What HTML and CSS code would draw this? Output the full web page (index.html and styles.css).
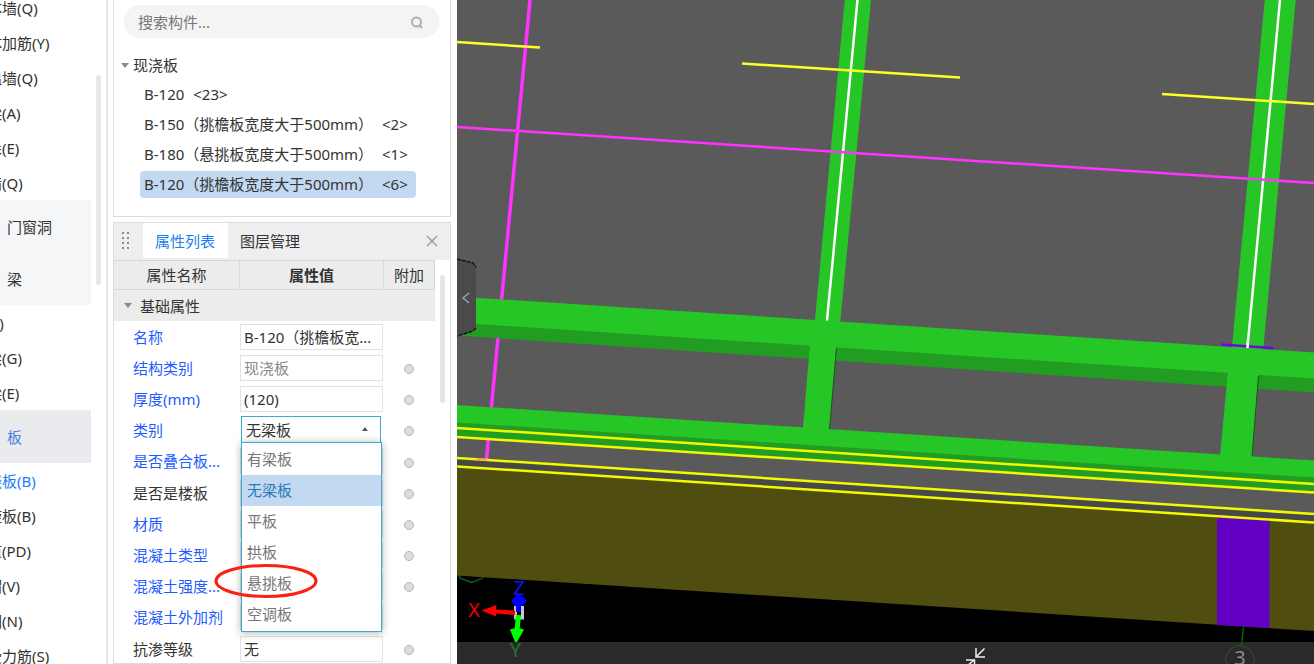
FILE: index.html
```
<!DOCTYPE html>
<html lang="zh-CN">
  <head>
    <meta charset="UTF-8" />
    <meta name="viewport" content="width=device-width, initial-scale=1.0" />
    <title>现浇板</title>
    <link rel="stylesheet" href="styles.css">
  </head>
  <body>
    <div class="app">
      <!-- 构件导航 -->
      <nav class="nav">
        <div class="nav-list">
          <div class="nav-items nav-items-first">
            <a href="#">砌体墙(Q)</a>
            <a href="#">砌体加筋(Y)</a>
            <a href="#">保温墙(Q)</a>
            <a href="#">暗梁(A)</a>
            <a href="#">墙垛(E)</a>
            <a href="#">幕墙(Q)</a>
          </div>
          <button class="nav-group" type="button">门窗洞</button>
          <button class="nav-group" type="button">梁</button>
          <div class="nav-items">
            <a href="#">梁(L)</a>
            <a href="#">连梁(G)</a>
            <a href="#">圈梁(E)</a>
          </div>
          <button class="nav-group open" type="button">板</button>
          <div class="nav-items">
            <a href="#" class="current">现浇板(B)</a>
            <a href="#">螺旋板(B)</a>
            <a href="#">坡道(PD)</a>
            <a href="#">柱帽(V)</a>
            <a href="#">板洞(N)</a>
            <a href="#">板受力筋(S)</a>
          </div>
        </div>
        <div class="nav-scroll"></div>
      </nav>

      <div class="side">
        <!-- 构件列表 -->
        <section class="panel tree-panel">
          <div class="search">
            <input type="search" placeholder="搜索构件..." aria-label="搜索构件" />
            <svg width="16" height="16" viewBox="0 0 16 16" fill="none" stroke="#b0b0b0" stroke-width="2">
              <circle cx="7.500" cy="8" r="4.500" />
              <path d="M10.500 11l2.500 3" />
            </svg>
          </div>
          <div class="tree-root"><span class="arrow-down"></span>现浇板</div>
          <ul class="tree">
            <li>B-120 <span class="count">&lt;23&gt;</span></li>
            <li>B-150（挑檐板宽度大于500mm） <span class="count">&lt;2&gt;</span></li>
            <li>B-180（悬挑板宽度大于500mm） <span class="count">&lt;1&gt;</span></li>
            <li class="selected">B-120（挑檐板宽度大于500mm） <span class="count">&lt;6&gt;</span></li>
          </ul>
        </section>

        <!-- 属性列表 -->
        <section class="panel props-panel">
          <div class="tabs">
            <svg class="grip" width="10" height="20" viewBox="0 0 10 20" fill="#8a8a8a">
              <path d="M1 1h2v2H1zM6 1h2v2H6zM1 6h2v2H1zM6 6h2v2H6zM1 11h2v2H1zM6 11h2v2H6zM1 16h2v2H1zM6 16h2v2H6z" />
            </svg>
            <button class="tab active" type="button">属性列表</button>
            <button class="tab" type="button">图层管理</button>
            <button class="close" type="button" aria-label="关闭">
              <svg width="12" height="12" viewBox="0 0 12 12" stroke="#a0a0a0" stroke-width="1.500">
                <path d="M1 1l10 10M11 1L1 11" />
              </svg>
            </button>
          </div>
          <div class="props-body">
            <table class="props">
              <colgroup>
                <col class="col-name" />
                <col />
                <col class="col-extra" />
              </colgroup>
              <thead>
                <tr>
                  <th>属性名称</th>
                  <th class="strong">属性值</th>
                  <th>附加</th>
                </tr>
                <tr class="group">
                  <td colspan="3"><span class="arrow-down"></span>基础属性</td>
                </tr>
              </thead>
              <tbody>
                <tr>
                  <td class="blue"><label for="p1">名称</label></td>
                  <td><input class="field" id="p1" type="text" value="B-120（挑檐板宽..." /></td>
                  <td></td>
                </tr>
                <tr>
                  <td class="blue"><label for="p2">结构类别</label></td>
                  <td><input class="field" id="p2" type="text" value="现浇板" disabled /></td>
                  <td><input class="dot" type="checkbox" aria-label="附加结构类别" /></td>
                </tr>
                <tr>
                  <td class="blue"><label for="p3">厚度(mm)</label></td>
                  <td><input class="field" id="p3" type="text" value="(120)" /></td>
                  <td><input class="dot" type="checkbox" aria-label="附加厚度" /></td>
                </tr>
                <tr>
                  <td class="blue"><label for="p4">类别</label></td>
                  <td>
                    <div class="combo">
                      <select id="p4">
                        <option>无梁板</option>
                      </select>
                      <span class="arrow-up"></span>
                      <ul class="options">
                        <li>有梁板</li>
                        <li class="selected">无梁板</li>
                        <li>平板</li>
                        <li>拱板</li>
                        <li class="marked">悬挑板
                          <svg class="mark" width="104" height="36" viewBox="0 0 104 36">
                            <ellipse cx="52" cy="18" rx="50" ry="15.500" fill="none" stroke="#fb2010" stroke-width="3" />
                          </svg>
                        </li>
                        <li>空调板</li>
                      </ul>
                    </div>
                  </td>
                  <td><input class="dot" type="checkbox" aria-label="附加类别" /></td>
                </tr>
                <tr>
                  <td class="blue"><label for="p5">是否叠合板...</label></td>
                  <td><input class="field" id="p5" type="text" /></td>
                  <td><input class="dot" type="checkbox" aria-label="附加叠合板" /></td>
                </tr>
                <tr>
                  <td><label for="p6">是否是楼板</label></td>
                  <td><input class="field" id="p6" type="text" /></td>
                  <td><input class="dot" type="checkbox" aria-label="附加楼板" /></td>
                </tr>
                <tr>
                  <td class="blue"><label for="p7">材质</label></td>
                  <td><input class="field" id="p7" type="text" /></td>
                  <td><input class="dot" type="checkbox" aria-label="附加材质" /></td>
                </tr>
                <tr>
                  <td class="blue"><label for="p8">混凝土类型</label></td>
                  <td><input class="field" id="p8" type="text" /></td>
                  <td><input class="dot" type="checkbox" aria-label="附加混凝土类型" /></td>
                </tr>
                <tr>
                  <td class="blue"><label for="p9">混凝土强度...</label></td>
                  <td><input class="field" id="p9" type="text" /></td>
                  <td><input class="dot" type="checkbox" aria-label="附加混凝土强度" /></td>
                </tr>
                <tr>
                  <td class="blue"><label for="p10">混凝土外加剂</label></td>
                  <td><input class="field" id="p10" type="text" /></td>
                  <td></td>
                </tr>
                <tr>
                  <td><label for="p11">抗渗等级</label></td>
                  <td><input class="field" id="p11" type="text" value="无" /></td>
                  <td><input class="dot" type="checkbox" aria-label="附加抗渗等级" /></td>
                </tr>
              </tbody>
            </table>
            <div class="props-scroll"></div>
          </div>
        </section>
      </div>

      <!-- 三维视图 -->
      <main class="view">
        <svg class="scene" viewBox="457 0 857 664" preserveAspectRatio="xMinYMin slice">
          <rect x="457" width="857" height="664" fill="#5a5a5a" />

          <!-- 轴线 -->
          <path d="M530 0L486.500 459" stroke="#ff32ff" stroke-width="3.500" />

          <!-- 竖向梁 -->
          <path d="M844.700 0H871L840 325H814.500z" fill="#26c626" />
          <path d="M1264.700 0H1295.700L1263 352H1231.500z" fill="#26c626" />

          <!-- 上部横梁 -->
          <path d="M457 322L1314 378V392.500L457 335.500z" fill="#219e21" />
          <path d="M457 296.500L1314 352.500V378.500L457 322.700z" fill="#26c626" />

          <!-- 下部横梁 -->
          <path d="M457 422L1314 477V492.500L457 437z" fill="#219e21" />
          <path d="M457 405L1314 460.500V477.500L457 422.500z" fill="#26c626" />
          <path d="M810 344L836.500 346L829.500 430L803 428z" fill="#26c626" />
          <path d="M1228 371L1258.500 373L1252 458L1220 456z" fill="#26c626" />
          <path d="M836.500 348L829.500 429M1258.500 376L1252 456" stroke="#1c541c" stroke-width="1" />

          <!-- 板外侧面 -->
          <path d="M457 458L1314 514V522.500L457 466.500z" fill="#484848" />
          <path d="M457 575L1314 630V664H457z" fill="#000" />
          <path d="M457 466.500L1314 522.500V631L457 575.500z" fill="#4f4d10" />
          <path d="M1217 517L1269.500 520.500V628L1217 625z" fill="#6200c4" />
          <g fill="none" stroke="#f2fa00" stroke-width="2.500">
            <path d="M457 428L1314 484M457 437L1314 492.500M457 458L1314 514M457 466.500L1314 522.500" />
            <path d="M457 42L540 47.500" stroke="#ffff28" />
          </g>
          <path d="M477 459.500h10" stroke="#ff9a50" stroke-width="2" />
          <path d="M857.500 0L827 320.500M1280 0L1247.500 347" stroke="#fff" stroke-width="2.500" />
          <path d="M742 63.500L960 77.500M1162 94L1314 104" stroke="#ffff28" stroke-width="2.500" />
          <path d="M457 127L1314 183" stroke="#ff32ff" stroke-width="2.500" />
          <path d="M1221.500 344.500L1273.500 348" stroke="#7800f0" stroke-width="2.500" />
          <path d="M1248 340L1247.500 348" stroke="#fff" stroke-width="2.500" />

          <!-- 底栏 -->
          <rect x="457" y="642" width="857" height="22" fill="#2a2a2a" />
          <path d="M1243.500 627L1241.500 645" stroke="#006400" stroke-width="1.500" />
          <path d="M1240 645l10 4 5 10-4 10-11 5-11-5-4-10 5-10z" fill="none" stroke="#244c24" stroke-width="1.500" />
          <text x="1240" y="665" font-size="20" fill="#8c8c8c" text-anchor="middle">3</text>
          <path d="M976 648v9h9M984.500 648.500L977 656M966 660h8.500v6M974 660l-8 7" fill="none" stroke="#eee" stroke-width="1.500" />
          <path d="M459 576l2 2.500 10.500 4 10.500-4 1-1.500" fill="none" stroke="#0e5c14" stroke-width="1.500" />

          <!-- 坐标轴 -->
          <path d="M515.500 606v12h7v-12" fill="none" stroke="#c8c8c8" stroke-width="3" />
          <path d="M496 609.500L515 610.500V615L496 613.500V616.500L481.500 610.500L496.500 605z" fill="#f00" />
          <path d="M518.500 615L517 631" stroke="#0f0" stroke-width="5" />
          <path d="M510 629.500q7-3 14 0L517 642h-2z" fill="#0f0" />
          <path d="M519 594l4 3q3 1 3 4-2 5-5 5v6h-5v-6q-3 0-4-5 0-3 3-4z" fill="#00f" />
          <text x="474" y="617" font-size="20" fill="#e80000" text-anchor="middle">X</text>
          <text x="519" y="595" font-size="20" fill="#1010ff" text-anchor="middle">Z</text>
          <text x="515.500" y="657" font-size="20" fill="#2c6e2c" text-anchor="middle">Y</text>
        </svg>
        <button class="collapse" type="button" aria-label="收起">
          <svg width="20" height="80" viewBox="0 0 20 80" fill="none">
            <path d="M0 2l16 4 3 4v61l-3 3-16 5z" fill="#4a4a4a" />
            <path d="M0 2l16 4 3 4M19 71l-3 3-16 5" stroke="#111" stroke-width="1.500" stroke-dasharray="4 1" />
            <path d="M12 36l-6 5 6 5" stroke="#a0a0a0" stroke-width="1.500" />
          </svg>
        </button>
      </main>
    </div>
  </body>
</html>
```
FILE: styles.css
```
* {
  box-sizing: border-box;
}

body {
  margin: 0;
  font-family: "Noto Sans", "Noto Sans CJK SC", sans-serif;
  font-size: 15px;
  line-height: 20px;
  color: #333;
  background-color: #fff;
}

button,
input,
select {
  font: inherit;
  color: inherit;
}

button {
  border: 0;
  padding: 0;
  background: none;
}

ul {
  list-style: none;
  margin: 0;
  padding: 0;
}

.app {
  display: flex;
  height: 100vh;
  overflow: hidden;
}

/* 左侧导航 */
.nav {
  display: flex;
  flex: none;
  width: 108px;
  overflow: hidden;
  border-right: 2px solid #e4e4e4;
}

.nav-list {
  flex: none;
  width: 91px;
}

.nav-items {
  display: flex;
  flex-direction: column;
  margin-left: -28px;
}

/* 列表已向下滚动 */
.nav-items-first {
  margin-top: -10px;
}

.nav-items a {
  height: 35px;
  padding-top: 8px;
  color: #333;
  text-decoration: none;
  white-space: nowrap;
}

.nav-items .current {
  color: #1a7ff0;
}

.nav-group {
  display: block;
  width: 100%;
  height: 53px;
  padding-left: 7px;
  text-align: left;
  background-color: #f5f6f8;
}

.nav-group + .nav-group {
  height: 52px;
}

.nav-group.open {
  color: #4d7fdc;
  background-color: #eaebef;
}

.nav-scroll {
  width: 5px;
  height: 210px;
  margin: 75px 0 0 5px;
  border-radius: 3px;
  background-color: #e8e8e8;
}

/* 中间面板 */
.side {
  display: flex;
  flex-direction: column;
  flex: none;
  gap: 5px;
  width: 349px;
  padding: 0 6px 0 5px;
}

.panel {
  border: 1px solid #dcdcdc;
}

.tree-panel {
  flex: none;
  height: 217px;
  padding: 5px 11px 0 10px;
  border-top: 0;
}

.search {
  display: flex;
  align-items: center;
  height: 33px;
  padding: 0 14px;
  border-radius: 16px;
  background-color: #f4f4f4;
}

.search input {
  flex: 1;
  min-width: 0;
  padding: 0;
  border: 0;
  outline: 0;
  background: none;
}

.search input::placeholder {
  color: #777;
}

.arrow-down {
  border: 4px solid transparent;
  border-top: 5px solid #8a8a8a;
  border-bottom: 0;
}

.tree-root {
  display: flex;
  align-items: center;
  height: 30px;
  margin: 12px 0 0 -3px;
  gap: 4px;
}

.tree {
  display: flex;
  flex-direction: column;
  align-items: flex-start;
  gap: 3px;
  padding: 1px 0 0 16px;
}

.tree li {
  height: 27px;
  padding: 3px 6px 0 4px;
  border-radius: 4px;
  white-space: nowrap;
}

.tree .count {
  margin: 0 2px 0 5px;
}

.tree .selected {
  background-color: #c2d9f1;
}

/* 属性面板 */
.props-panel {
  flex: 1;
  min-height: 0;
  overflow: hidden;
}

.tabs {
  display: flex;
  align-items: flex-start;
  height: 37px;
  background-color: #eeeef1;
}

.grip {
  margin: 8px 12px 0 7px;
}

.tab {
  height: 35px;
  padding: 0 12px;
}

.tab.active {
  padding-right: 13px;
  color: #1a7ff0;
  background-color: #fff;
}

.close {
  display: flex;
  margin-left: auto;
  padding: 12px;
}

.props-body {
  display: flex;
  gap: 5px;
}

.props {
  flex: none;
  width: 321px;
  table-layout: fixed;
  border-collapse: separate;
  border-spacing: 0;
}

.props .col-name {
  width: 126px;
}

.props .col-extra {
  width: 51px;
}

.props th {
  height: 30px;
  padding: 0;
  font-weight: 400;
  background-color: #ececec;
  border: 1px solid #d8d8d8;
  border-width: 1px 1px 1px 0;
}

.props .strong {
  font-weight: 700;
}

.group td {
  height: 31px;
  padding: 0 0 0 10px;
  background-color: #ececec;
}

.group .arrow-down {
  display: inline-block;
  margin-right: 8px;
  vertical-align: 4px;
}

.props tbody td {
  height: 31px;
  padding: 0;
}

.props tbody tr:nth-child(5n) td {
  height: 32px;
}

.props tbody td:first-child {
  padding-left: 19px;
  white-space: nowrap;
}

.props tbody td:last-child {
  padding-right: 2px;
  text-align: center;
}

.blue {
  color: #1f5cff;
}

.field {
  display: block;
  width: 143px;
  height: 26px;
  padding: 0 3px;
  border: 1px solid #e2e2e2;
  background-color: #fff;
}

.field:disabled {
  color: #888;
}

.dot {
  appearance: none;
  display: inline-block;
  width: 10px;
  height: 10px;
  margin: 0;
  border: 1px solid #b4b6ba;
  border-radius: 50%;
  background-color: #dcdde0;
  vertical-align: middle;
}

/* 下拉框 */
.combo {
  position: relative;
  width: 140px;
  margin-left: 1px;
}

.combo select {
  appearance: none;
  display: block;
  width: 100%;
  height: 27px;
  padding: 0 4px;
  border: 1px solid #3ba9d2;
  border-radius: 0;
  background-color: #fff;
}

.arrow-up {
  position: absolute;
  top: 11px;
  right: 13px;
  border: 3px solid transparent;
  border-top: 0;
  border-bottom: 4px solid #555;
}

.options {
  position: absolute;
  z-index: 1;
  top: 26px;
  left: 0;
  width: 141px;
  padding: 1px 0;
  color: #777;
  border: 1px solid #3ba9d2;
  background-color: #fff;
  box-shadow: 0 1px 8px rgba(0, 0, 0, 0.3);
}

.options li {
  height: 31px;
  padding: 5px 5px 0;
}

.options .selected {
  color: #2a7ab8;
  background-color: #c2d9f1;
}

.marked {
  position: relative;
}

.mark {
  position: absolute;
  top: -5px;
  left: -28px;
}

.props-scroll {
  flex: none;
  width: 5px;
  height: 128px;
  margin-top: 15px;
  border-radius: 3px;
  background-color: #e6e6e6;
}

/* 三维视图 */
.view {
  position: relative;
  flex: 1;
  min-width: 0;
  background-color: #5a5a5a;
}

.scene {
  display: block;
  width: 100%;
  height: 100%;
}

.collapse {
  position: absolute;
  top: 257px;
  left: 0;
}
```
